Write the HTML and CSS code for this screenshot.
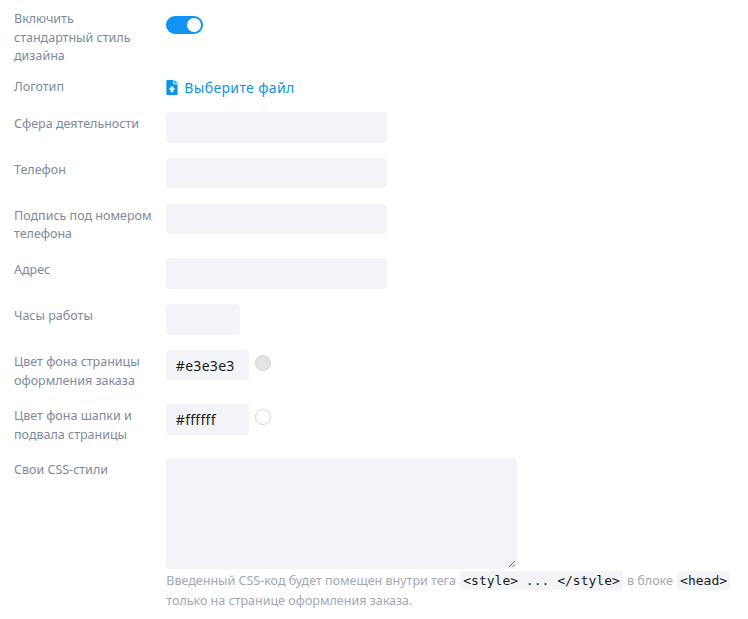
FILE: index.html
```html
<!DOCTYPE html>
<html lang="ru">
<head>
<meta charset="utf-8">
<title>Настройки</title>
<link rel="stylesheet" href="styles.css">
</head>
<body>
<form class="form">
  <div class="row row-toggle">
    <div class="label">Включить стандартный стиль дизайна</div>
    <div class="value"><span class="toggle"><span class="knob"></span></span></div>
  </div>
  <div class="row row-file">
    <div class="label">Логотип</div>
    <div class="value"><a class="file" href="#"><svg class="file-icon" viewBox="0 0 12 16" width="12" height="15"><path fill="#0a95e8" d="M1 0h6.500v4.500H12V15a1 1 0 0 1-1 1H1a1 1 0 0 1-1-1V1a1 1 0 0 1 1-1z"/><path fill="#0a95e8" d="M8.500 0 12 3.500H8.500z"/><path fill="#fff" d="M6 6.500 9.600 10.200H7.400V13H4.600V10.200H2.400z"/></svg>Выберите файл</a></div>
  </div>
  <div class="row"><div class="label">Сфера деятельности</div><div class="value"><div class="input wide"></div></div></div>
  <div class="row"><div class="label">Телефон</div><div class="value"><div class="input wide"></div></div></div>
  <div class="row"><div class="label">Подпись под номером телефона</div><div class="value"><div class="input wide"></div></div></div>
  <div class="row"><div class="label">Адрес</div><div class="value"><div class="input wide"></div></div></div>
  <div class="row"><div class="label">Часы работы</div><div class="value"><div class="input short"></div></div></div>
  <div class="row"><div class="label">Цвет фона страницы оформления заказа</div><div class="value color"><div class="input hex">#e3e3e3</div><span class="swatch grey"></span></div></div>
  <div class="row"><div class="label">Цвет фона шапки и подвала страницы</div><div class="value color"><div class="input hex">#ffffff</div><span class="swatch white"></span></div></div>
  <div class="row row-css">
    <div class="label">Свои CSS-стили</div>
    <div class="value">
      <div class="textarea"><svg class="grip" viewBox="0 0 8 8" width="8" height="8"><path d="M1 7 7 1M4.500 7 7 4.500" stroke="#666" stroke-width="1" fill="none"/></svg></div>
      <p class="hint">Введенный CSS-код будет помещен внутри тега <code>&lt;style&gt; ... &lt;/style&gt;</code> в блоке <code>&lt;head&gt;</code> только на странице оформления заказа.</p>
    </div>
  </div>
</form>
</body>
</html>
```
FILE: styles.css
```css
* { box-sizing: border-box; }
html, body { margin: 0; background: #fff; }
body { font-family: "Noto Sans", sans-serif; width: 748px; height: 619px; overflow: hidden; }
.form { display: flex; flex-direction: column; padding: 8px 0 0 14px; }
.row { display: grid; grid-template-columns: 152.300px 1fr; margin-bottom: 15.200px; }
.row-toggle { margin-bottom: 12px; }
.row-file { margin-bottom: 15px; }
.row-css { margin-top: -0.800px; }
.label { font-size: 12.500px; line-height: 18.700px; color: #7e8a9c; padding: 3px 12.300px 0 0; margin-bottom: -1px; }
.row-toggle .label { padding-top: 2px; margin-bottom: 0; }
.row-file .label { padding-top: 0; margin-bottom: 0; }
.toggle { display: flex; align-items: center; justify-content: flex-end; width: 37px; height: 18px; margin-top: 8px; border-radius: 9px; background: #0f94f5; padding-right: 2px; }
.knob { width: 14px; height: 14px; border-radius: 50%; background: #fff; }
.file { display: flex; align-items: center; gap: 6px; height: 19px; font-size: 14px; letter-spacing: 0.350px; color: #0a95e8; text-decoration: none; }
.file-icon { flex: none; }
.input { height: 30.600px; border-radius: 4px; background: #f3f4f7; }
.wide { width: 220.500px; }
.short { width: 73.500px; }
.color { display: flex; align-items: flex-start; gap: 6px; }
.hex { width: 83px; padding: 0 9.500px; font: 14px/31px "Noto Sans", sans-serif; letter-spacing: 0.300px; color: #1a1a1a; }
.swatch { width: 16px; height: 16px; margin-top: 5px; border-radius: 50%; border: 1px solid #d8d8d8; }
.grey { background: #e3e3e3; }
.white { background: #fff; }
.textarea { position: relative; width: 350.500px; height: 110.500px; border-radius: 4px; background: #f3f4f7; }
.grip { position: absolute; right: 1px; bottom: 1px; }
.hint { margin: 2.500px 0 0; width: 570px; font-size: 12.500px; line-height: 20px; color: #a3a8b4; }
code { font: 13px "DejaVu Sans Mono", monospace; color: #1a1a1a; background: #f3f4f7; border-radius: 4px; padding: 2px 3px; margin: 0 1px; }
```
